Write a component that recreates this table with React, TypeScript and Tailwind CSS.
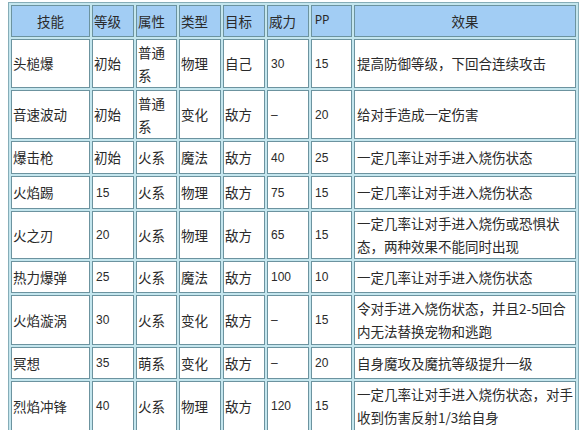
import React from "react";

type Row = string[][];

const header = ["技能", "等级", "属性", "类型", "目标", "威力", "PP", "效果"];

const rows: Row[] = [
  [["头槌爆"], ["初始"], ["普通", "系"], ["物理"], ["自己"], ["30"], ["15"], ["提高防御等级，下回合连续攻击"]],
  [["音速波动"], ["初始"], ["普通", "系"], ["变化"], ["敌方"], ["–"], ["20"], ["给对手造成一定伤害"]],
  [["爆击枪"], ["初始"], ["火系"], ["魔法"], ["敌方"], ["40"], ["25"], ["一定几率让对手进入烧伤状态"]],
  [["火焰踢"], ["15"], ["火系"], ["物理"], ["敌方"], ["75"], ["15"], ["一定几率让对手进入烧伤状态"]],
  [["火之刃"], ["20"], ["火系"], ["物理"], ["敌方"], ["65"], ["15"], ["一定几率让对手进入烧伤或恐惧状", "态，两种效果不能同时出现"]],
  [["热力爆弹"], ["25"], ["火系"], ["魔法"], ["敌方"], ["100"], ["10"], ["一定几率让对手进入烧伤状态"]],
  [["火焰漩涡"], ["30"], ["火系"], ["变化"], ["敌方"], ["–"], ["15"], ["令对手进入烧伤状态，并且2-5回合", "内无法替换宠物和逃跑"]],
  [["冥想"], ["35"], ["萌系"], ["变化"], ["敌方"], ["–"], ["20"], ["自身魔攻及魔抗等级提升一级"]],
  [["烈焰冲锋"], ["40"], ["火系"], ["物理"], ["敌方"], ["120"], ["15"], ["一定几率让对手进入烧伤状态，对手", "收到伤害反射1/3给自身"]],
];

const isNum = (s: string) => /^[0-9–]+$/.test(s);

export default function App() {
  return (
    <div className="w-[583px] h-[430px] overflow-hidden bg-white">
      <div className="ml-[8px] mt-[2px] w-[571px] border border-[#86adb8] bg-[#c4e6ee] p-[2px]">
        <div className="grid grid-cols-[79px_42px_41px_42px_42px_42px_41px_222px] grid-rows-[32px_49px_49px_33px_33px_48px_32px_50px_32px_50px] gap-[2px]">
          {header.map((h, i) => (
            <div
              key={"h" + i}
              className={
                "flex items-center border border-[#6c939f] bg-[#a2cdf4] text-[#2a2a2a] " +
                (i === 0 || i === 7 ? "justify-center " : "justify-start pl-[1px] ") +
                (h === "PP"
                  ? "font-['Liberation_Mono',monospace] text-[12px] pl-[3px]"
                  : "font-['Noto_Sans_CJK_SC',sans-serif] text-[13.5px]")
              }
            >
              {h}
            </div>
          ))}
          {rows.map((r, ri) =>
            r.map((cell, ci) => {
              const num = cell.length === 1 && isNum(cell[0]);
              return (
                <div
                  key={ri + "-" + ci}
                  className={
                    "flex flex-col justify-center border border-[#6c939f] bg-white text-[#2a2a2a] whitespace-nowrap overflow-hidden " +
                    (num
                      ? "pl-[3px] font-['Liberation_Sans',sans-serif] text-[12px]"
                      : "font-['Noto_Sans_CJK_SC',sans-serif] text-[13.5px] leading-[23px] " +
                        (ci === 7 ? "pl-[2px]" : "pl-[1px]"))
                  }
                >
                  {cell.map((line, li) => (
                    <span key={li}>{line}</span>
                  ))}
                </div>
              );
            })
          )}
        </div>
      </div>
    </div>
  );
}
